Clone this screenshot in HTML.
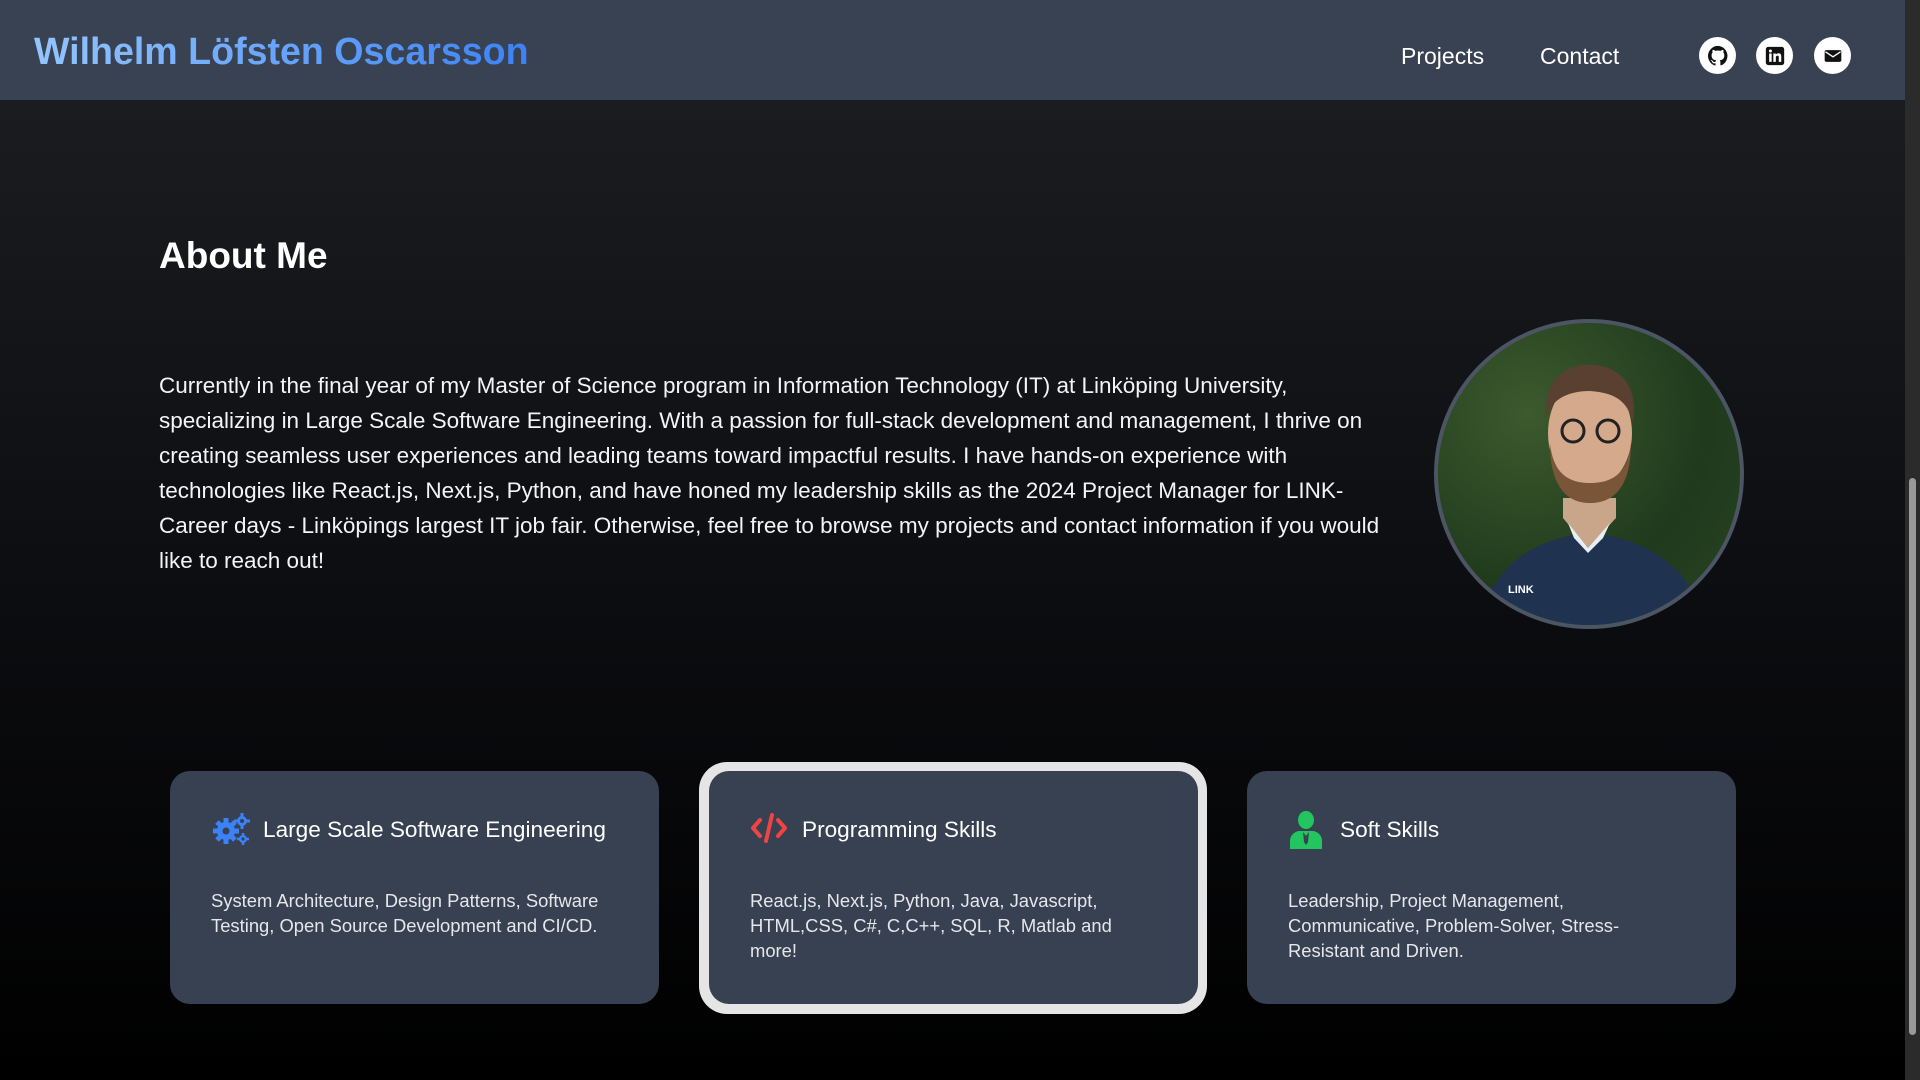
<!DOCTYPE html>
<html><head><meta charset="utf-8"><style>
*{margin:0;padding:0;box-sizing:border-box}
body{width:1920px;height:1080px;overflow:hidden;font-family:"Liberation Sans",sans-serif;background:linear-gradient(#1b1c1f 100px,#0c0d10 600px,#000 1080px);position:relative;color:#fff}
header{position:absolute;left:0;top:0;width:1905px;height:100px;background:#394253}
.title{position:absolute;left:34px;top:30px;font-size:37.6px;font-weight:bold;background:linear-gradient(90deg,#93c5fd,#3b82f6);-webkit-background-clip:text;background-clip:text;color:transparent}
.nav{position:absolute;top:43px;font-size:23px;color:#fff}
.ic{position:absolute;top:37px;width:37px;height:37px;border-radius:50%;background:#fff;display:flex;align-items:center;justify-content:center}
.sb{position:absolute;right:0;top:0;width:15px;height:1080px;background:#2b2b2b}
.sb div{position:absolute;left:4px;width:7px;top:478px;height:557px;background:#9a9a9a;border-radius:4px}
h1{position:absolute;left:159px;top:235px;font-size:37px;font-weight:bold}
p.about{position:absolute;left:159px;top:368px;width:1232px;font-size:22.5px;line-height:35px;color:#f3f4f6}
.photo{position:absolute;left:1434px;top:319px;width:310px;height:310px;border-radius:50%;border:4px solid #4b5563;overflow:hidden;background:radial-gradient(circle at 30% 30%,#3c5a2e,#1f3a1c 60%,#2a4424)}
.card{position:absolute;top:771px;width:489px;height:233px;background:#374151;border-radius:20px}
.card h3{position:absolute;left:93px;top:44px;font-size:22.6px;font-weight:normal;line-height:30px}
.card .i{position:absolute;left:41px;top:41px}
.card p{position:absolute;left:41px;top:117px;width:398px;font-size:18.4px;line-height:25px;color:#e5e7eb}
</style></head><body>
<header>
<div class="title">Wilhelm Löfsten Oscarsson</div>
<div class="nav" style="left:1401px">Projects</div>
<div class="nav" style="left:1540px">Contact</div>
<div class="ic" style="left:1699px"><svg width="22" height="22" viewBox="0 0 24 24"><path fill="#111" d="M12 1a11 11 0 0 0-3.5 21.4c.6.1.8-.2.8-.5v-2c-3.1.7-3.7-1.4-3.7-1.4-.5-1.300-1.2-1.6-1.2-1.6-1-.7.1-.7.1-.7 1.1.1 1.7 1.1 1.7 1.1 1 1.7 2.6 1.2 3.2.9.1-.7.4-1.2.7-1.5-2.5-.3-5.1-1.2-5.1-5.5 0-1.2.4-2.2 1.1-3-.1-.3-.5-1.4.1-2.9 0 0 .9-.3 3 1.1a10 10 0 0 1 5.500 0c2.1-1.4 3-1.1 3-1.100.6 1.5.2 2.6.1 2.9.7.8 1.1 1.8 1.1 3 0 4.3-2.6 5.2-5.1 5.5.4.3.8 1 .8 2v3c0 .3.2.6.8.5A11 11 0 0 0 12 1z"/></svg></div>
<div class="ic" style="left:1756px"><svg width="20" height="20" viewBox="0 0 24 24"><rect x="1" y="1" width="22" height="22" rx="3" fill="#111"/><rect x="5" y="9" width="3" height="10" fill="#fff"/><circle cx="6.5" cy="6" r="1.8" fill="#fff"/><path fill="#fff" d="M10 9h3v1.5c.6-1 1.8-1.8 3.3-1.8 2.5 0 3.2 1.7 3.2 4V19h-3v-5.5c0-1.3-.4-2-1.5-2s-2 .8-2 2.2V19h-3z"/></svg></div>
<div class="ic" style="left:1814px"><svg width="20" height="20" viewBox="0 0 24 24"><rect x="2" y="5" width="20" height="14" rx="2" fill="#111"/><path d="M3 7l9 6 9-6" stroke="#fff" stroke-width="1.6" fill="none"/></svg></div>
</header>
<div class="sb"><div></div></div>
<h1>About Me</h1>
<p class="about">Currently in the final year of my Master of Science program in Information Technology (IT) at Linköping University, specializing in Large Scale Software Engineering. With a passion for full-stack development and management, I thrive on creating seamless user experiences and leading teams toward impactful results. I have hands-on experience with technologies like React.js, Next.js, Python, and have honed my leadership skills as the 2024 Project Manager for LINK-Career days - Linköpings largest IT job fair. Otherwise, feel free to browse my projects and contact information if you would like to reach out!</p>
<div class="photo"><svg width="310" height="310" viewBox="0 0 310 310"><path d="M40 310 C50 240 100 215 150 210 C205 215 255 240 270 310Z" fill="#1f3350"/><path d="M125 195 L150 225 L178 195 L178 175 L125 175Z" fill="#c9a58a"/><path d="M130 200 L150 225 L172 200 L165 215 L150 230 L136 215Z" fill="#e8eef5"/><ellipse cx="152" cy="110" rx="42" ry="56" fill="#d4a98c"/><path d="M112 120 C112 165 130 180 152 180 C175 180 193 165 193 120 C190 150 175 160 152 160 C130 160 115 150 112 120Z" fill="#7a5538"/><path d="M108 95 C105 50 135 40 155 42 C185 44 200 65 195 100 C190 80 180 70 152 68 C125 68 112 80 108 95Z" fill="#5a4030"/><circle cx="135" cy="108" r="11" fill="none" stroke="#222" stroke-width="3"/><circle cx="170" cy="108" r="11" fill="none" stroke="#222" stroke-width="3"/><text x="70" y="270" font-size="11" fill="#fff" font-family="Liberation Sans" font-weight="bold">LINK</text></svg></div>

<div style="position:absolute;left:699px;top:762px;width:508px;height:252px;background:#e5e5e5;border-radius:28px"></div>
<div class="card" style="left:170px">
<svg class="i" width="40" height="34" viewBox="0 0 40 34"><g fill="#3b82f6"><circle cx="15" cy="19" r="9"/><g stroke="#3b82f6" stroke-width="5"><path d="M15 6v26M2 19h26M6 10l18 18M24 10L6 28"/></g><circle cx="15" cy="19" r="3.5" fill="#374151"/><circle cx="31" cy="9" r="5"/><g stroke="#3b82f6" stroke-width="3"><path d="M31 1v16M23 9h16"/></g><circle cx="31" cy="9" r="2" fill="#374151"/><circle cx="32" cy="27" r="4"/><g stroke="#3b82f6" stroke-width="2.5"><path d="M32 21v12M26 27h12"/></g><circle cx="32" cy="27" r="1.6" fill="#374151"/></g></svg>
<h3>Large Scale Software Engineering</h3>
<p>System Architecture, Design Patterns, Software Testing, Open Source Development and CI/CD.</p></div>
<div class="card" style="left:709px">
<svg class="i" width="38" height="32" viewBox="0 0 38 32"><g stroke="#ef4444" stroke-width="4" fill="none" stroke-linecap="round" stroke-linejoin="round"><path d="M10 8L3 16l7 8M28 8l7 8-7 8M22 3L16 29"/></g></svg>
<h3>Programming Skills</h3>
<p style="width:370px">React.js, Next.js, Python, Java, Javascript, HTML,CSS, C#, C,C++, SQL, R, Matlab and more!</p></div>
<div class="card" style="left:1247px">
<svg class="i" width="36" height="38" viewBox="0 0 36 38" style="top:40px"><ellipse cx="18" cy="9" rx="8" ry="9" fill="#22c55e"/><path d="M2 38V30c0-6 5-10 10-10h12c5 0 10 4 10 10v8z" fill="#22c55e"/><path d="M15 21l3 4 3-4 -1 10-2 3-2-3z" fill="#374151"/></svg>
<h3>Soft Skills</h3>
<p style="width:370px">Leadership, Project Management, Communicative, Problem-Solver, Stress-Resistant and Driven.</p></div>
</body></html>
